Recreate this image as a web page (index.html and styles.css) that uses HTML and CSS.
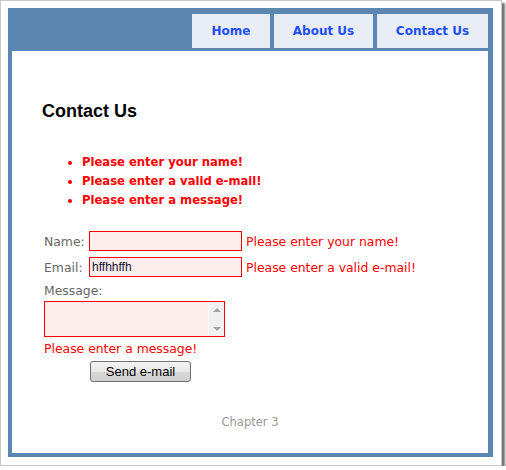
FILE: index.html
```html
<!DOCTYPE html>
<html>
<head>
<meta charset="utf-8">
<title>Contact Us</title>
<link rel="stylesheet" href="styles.css">
</head>
<body>
<div class="frame">
  <div class="site">
    <div class="header">
      <nav class="tabs">
        <a class="tab tab-home" href="#">Home</a>
        <a class="tab tab-about" href="#">About Us</a>
        <a class="tab tab-contact" href="#">Contact Us</a>
      </nav>
    </div>
    <div class="content">
      <h1 class="title">Contact Us</h1>
      <ul class="summary">
        <li>Please enter your name!</li>
        <li>Please enter a valid e-mail!</li>
        <li>Please enter a message!</li>
      </ul>
      <form class="form">
        <div class="row">
          <label class="label">Name:</label>
          <input class="field" type="text" value="">
          <span class="msg">Please enter your name!</span>
        </div>
        <div class="row row-email">
          <label class="label">Email:</label>
          <input class="field" type="text" value="hffhhffh">
          <span class="msg">Please enter a valid e-mail!</span>
        </div>
        <div class="label-line">Message:</div>
        <div class="textbox">
          <textarea class="area"></textarea>
          <div class="scroll">
            <span class="arrow up"></span>
            <span class="arrow down"></span>
          </div>
        </div>
        <div class="msg msg-block">Please enter a message!</div>
        <button class="send" type="button">Send e-mail</button>
      </form>
      <p class="footer">Chapter 3</p>
    </div>
  </div>
</div>
</body>
</html>
```
FILE: styles.css
```css
html, body {
  margin: 0;
  padding: 0;
  background: #ffffff;
}

.frame {
  box-sizing: border-box;
  width: 502px;
  height: 466px;
  padding: 7px;
  border: 1px solid #c8c8c8;
  background: #ffffff;
  box-shadow: 3px 3px 2px rgba(0, 0, 0, 0.55);
}

.site {
  box-sizing: border-box;
  width: 485px;
  height: 449px;
  background: #5b87b2;
  padding: 0 5px 4px 4px;
  display: flex;
  flex-direction: column;
}

.header {
  padding: 6px 0 3px;
}

.tabs {
  display: flex;
  justify-content: flex-end;
  gap: 4px;
}

.tab {
  height: 34px;
  display: flex;
  align-items: center;
  justify-content: center;
  background: #e8edf6;
  color: #1f4ff2;
  font-family: "DejaVu Sans", Verdana, sans-serif;
  font-weight: bold;
  font-size: 12px;
  text-decoration: none;
}

.tab-home { width: 78px; }
.tab-about { width: 99px; }
.tab-contact { width: 111px; }

.content {
  flex: 1;
  background: #ffffff;
  padding-left: 30px;
}

.title {
  margin: 50px 0 0;
  font-family: "Liberation Sans", Arial, sans-serif;
  font-size: 18px;
  line-height: 21px;
  font-weight: bold;
  color: #000000;
}

.summary {
  margin: 31px 0 0;
  padding-left: 40px;
  color: #ff0000;
  font-family: "DejaVu Sans", Verdana, sans-serif;
  font-weight: bold;
  font-size: 11.6px;
  line-height: 19px;
}

.form {
  margin: 21px 0 0;
  padding-left: 2px;
  font-family: "DejaVu Sans", Verdana, sans-serif;
  font-size: 12.4px;
}

.row {
  display: flex;
  align-items: center;
  height: 20px;
}

.row-email {
  margin-top: 6px;
}

.label {
  width: 45px;
  color: #666666;
}

.field {
  box-sizing: border-box;
  width: 153px;
  height: 20px;
  margin: 0;
  padding: 0 2px;
  border: 1px solid #ff0000;
  background: #fdeded;
  color: #111133;
  font-family: "Liberation Sans", Arial, sans-serif;
  font-size: 12px;
  outline: none;
}

.msg {
  color: #ff0000;
  margin-left: 4px;
}

.label-line {
  margin-top: 5px;
  line-height: 18px;
  color: #666666;
}

.textbox {
  box-sizing: border-box;
  width: 181px;
  height: 36px;
  margin-top: 1px;
  border: 1px solid #ff0000;
  background: #fdeded;
  display: flex;
}

.area {
  flex: 1;
  margin: 0;
  padding: 2px;
  border: none;
  background: transparent;
  resize: none;
  outline: none;
}

.scroll {
  width: 15px;
  background: #f0f0f0;
  border-left: 1px solid #f7f7f7;
  display: flex;
  flex-direction: column;
  align-items: center;
  justify-content: space-between;
  padding: 6px 0 5px;
}

.arrow {
  width: 0;
  height: 0;
  border-left: 4px solid transparent;
  border-right: 4px solid transparent;
}

.arrow.up {
  border-bottom: 4px solid #a3a3a3;
}

.arrow.down {
  border-top: 4px solid #a3a3a3;
}

.msg-block {
  margin: 3px 0 0;
  line-height: 18px;
}

.send {
  display: block;
  box-sizing: border-box;
  width: 101px;
  height: 21px;
  margin: 3px 0 0 46px;
  padding: 0;
  border: 1px solid #707070;
  border-radius: 3px;
  background: linear-gradient(#f4f4f4, #e8e8e8 50%, #d8d8d8 51%, #cfcfcf);
  color: #000000;
  font-family: "Liberation Sans", Arial, sans-serif;
  font-size: 13px;
}

.footer {
  margin: 32px 0 0 -30px;
  text-align: center;
  color: #999999;
  font-family: "DejaVu Sans", Verdana, sans-serif;
  font-size: 11.5px;
  line-height: 16px;
}
```
